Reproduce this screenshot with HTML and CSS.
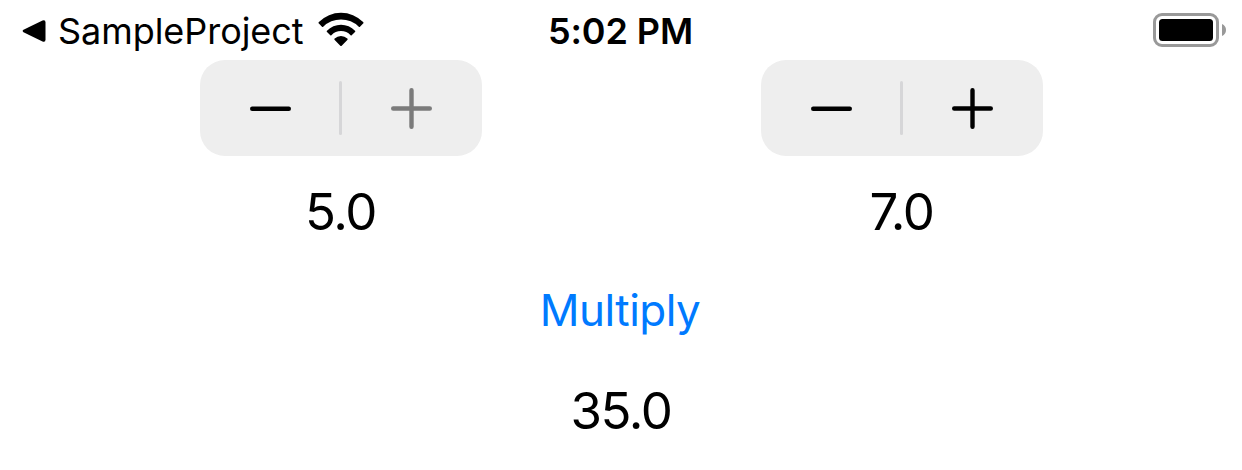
FILE: index.html
```html
<!DOCTYPE html>
<html lang="en">
<head>
<meta charset="utf-8">
<title>SampleProject</title>
<link rel="stylesheet" href="styles.css">
</head>
<body>
<header class="status">
  <div class="back">
    <svg class="arrow" width="24" height="22" viewBox="0 0 24 22"><path d="M1.500 9.800 20.500.6Q23.500-.6 23.500 2.500V19.500Q23.500 22.600 20.500 21.400L1.500 12.200Q-.2 11 1.500 9.800Z"/></svg>
    <span class="app">SampleProject</span>
    <svg class="wifi" width="46" height="35" viewBox="0 0 46 35"><path d="M.9 11.600Q0 10.800 .9 10A31 31 0 0 1 45.100 10Q46 10.800 45.100 11.600L42 14.800Q41.500 15.400 40.800 14.800A25.200 25.200 0 0 0 5.200 14.800Q4.500 15.400 4 14.800ZM9 20Q8.300 19.300 9 18.700A19.200 19.200 0 0 1 37 18.700Q37.700 19.300 37 20L33.700 23.200Q33.200 23.700 32.600 23.200A13.300 13.300 0 0 0 13.400 23.200Q12.800 23.700 12.300 23.200ZM16.700 28Q15.900 27.200 16.700 26.600A8.700 8.700 0 0 1 29.300 26.600Q30.100 27.200 29.300 28L23.700 33.700Q23 34.400 22.300 33.700Z"/></svg>
  </div>
  <time class="clock">5:02 PM</time>
  <svg class="battery" width="74" height="34" viewBox="0 0 74 34"><rect class="shell" x="1.500" y="1.500" width="63" height="31" rx="7.500"/><rect x="6" y="6" width="54" height="22" rx="3.500"/><path class="cap" d="M69 11Q73 12.800 73 17T69 23Z"/></svg>
</header>
<main class="content">
  <div class="steppers">
    <section class="column">
      <div class="stepper">
        <button class="step" aria-label="Decrease"><svg width="41" height="42" viewBox="0 0 41 42"><path d="M2.200 21.800H38.800"/></svg></button>
        <span class="divider"></span>
        <button class="step" disabled aria-label="Increase"><svg width="41" height="42" viewBox="0 0 41 42"><path d="M2.200 21.500H38.800M20.500 3.200V39.800"/></svg></button>
      </div>
      <output class="value">5.0</output>
    </section>
    <section class="column">
      <div class="stepper">
        <button class="step" aria-label="Decrease"><svg width="41" height="42" viewBox="0 0 41 42"><path d="M2.200 21.800H38.800"/></svg></button>
        <span class="divider"></span>
        <button class="step" aria-label="Increase"><svg width="41" height="42" viewBox="0 0 41 42"><path d="M2.200 21.500H38.800M20.500 3.200V39.800"/></svg></button>
      </div>
      <output class="value">7.0</output>
    </section>
  </div>
  <button class="multiply">Multiply</button>
  <output class="value result">35.0</output>
</main>
</body>
</html>
```
FILE: styles.css
```css
* { box-sizing: border-box; }
body { margin: 0; background: #fff; color: #000; font-family: Inter, sans-serif; }
svg { display: block; flex: none; }
button { border: 0; padding: 0; background: none; font: inherit; color: #000; }
.status { display: grid; grid-template-columns: 1fr auto 1fr; height: 60px; align-items: center; padding: 0 15px; }
.back { display: flex; align-items: center; padding: 2px 0 0 7px; }
.app { margin: 0 14px 0 12px; font-size: 36px; letter-spacing: -.05px; white-space: nowrap; }
.wifi { margin-bottom: 3px; }
.clock { padding: 2px 1px 0 0; font-size: 36px; font-weight: 600; letter-spacing: -.1px; }
.battery { justify-self: end; }
.shell { fill: none; stroke: #999; stroke-width: 3; }
.cap { fill: #999; }
.steppers { display: flex; padding-left: 200px; gap: 279px; }
.column { width: 282px; display: flex; flex-direction: column; align-items: center; }
.stepper { width: 282px; height: 96px; border-radius: 25px; background: #eee; display: grid; grid-template-columns: 139px 3px 140px; align-items: center; }
.step { height: 96px; display: flex; align-items: center; justify-content: center; }
.step:first-child { padding-left: 2px; }
.step:last-child { padding-right: 1px; }
.step path { fill: none; stroke: #000; stroke-width: 4.4; stroke-linecap: round; }
.step:disabled path { stroke: #7b7b7b; }
.divider { height: 54px; border-radius: 2px; background: #d6d6d8; }
.value { font-size: 51px; font-weight: 370; line-height: 60px; letter-spacing: -1.4px; }
.column .value { margin-top: 26px; padding-right: 1px; }
.content { display: flex; flex-direction: column; }
.multiply { margin: 38px auto 0; padding-right: 2px; color: #007aff; font-size: 44px; line-height: 60px; letter-spacing: -.5px; }
.result { margin: 41px auto 0; }
```
